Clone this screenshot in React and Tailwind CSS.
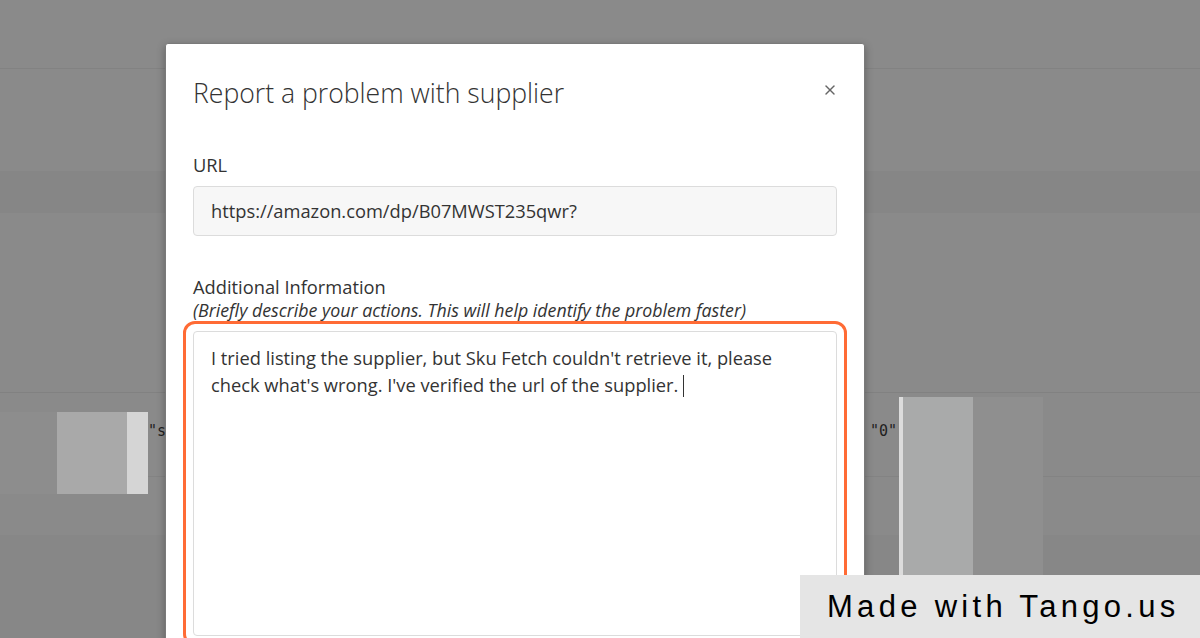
import React from 'react';
import { X } from 'lucide-react';

const App = () => {
    return (
        <div className="relative w-[1200px] h-[638px] overflow-hidden bg-[#8a8a8a] font-['Open_Sans',sans-serif]">

            {/* dimmed page behind the modal */}
            <div className="flex flex-col">
                <div className="h-[69px] border-b border-[#828282]"></div>
                <div className="h-[102px]"></div>
                <div className="h-[42px] bg-[#868686]"></div>
                <div className="h-[180px] border-b border-[#818181]"></div>
                <div className="h-[84px] border-b border-[#838383] flex items-start pt-[19px]">
                    <div className="w-[57px] h-[82px] bg-[#8d8d8d]"></div>
                    <div className="w-[70px] h-[82px] bg-[#a9a9a9]"></div>
                    <div className="w-[21px] h-[82px] bg-[#d5d5d5]"></div>
                    <span className="pt-[8px] font-['DejaVu_Sans_Mono',monospace] text-[15px] text-[#1f1f1f]">"s</span>
                    <span className="ml-auto mr-[303px] pt-[8px] font-['DejaVu_Sans_Mono',monospace] text-[15px] text-[#1f1f1f]">"0"</span>
                </div>
                <div className="h-[58px]"></div>
                <div className="h-[120px] bg-[#878787]"></div>
            </div>

            {/* light column on the right side of the page */}
            <div className="absolute left-[899px] top-[397px] w-[144px] h-[241px] flex">
                <div className="w-[4px] bg-[#dcdcdc]"></div>
                <div className="w-[70px] bg-[#a9aaaa]"></div>
                <div className="w-[70px] bg-[#8f8f8f]"></div>
            </div>

            {/* modal */}
            <div className="absolute left-[165px] top-[43px] w-[700px] h-[620px] bg-white border border-[#7a7a7a] rounded-[3px] shadow-[0_3px_9px_rgba(0,0,0,0.3)]">
                <div className="flex items-center justify-between pl-[27px] pr-[26px] pt-[29px]">
                    <h2 className="text-[26.6px] leading-[40px] font-light text-[#333]">Report a problem with supplier</h2>
                    <X size={16} strokeWidth={2.2} className="text-[#666] mt-[-6px]" />
                </div>

                <div className="px-[27px] pt-[40px]">
                    <label className="block text-[18.3px] leading-[24px] text-[#333]">URL</label>
                    <div className="mt-[9px] h-[50px] flex items-center px-[17px] bg-[#f7f7f7] border border-[#dcdcdc] rounded-[4px] text-[18.3px] text-[#333]">
                        https://amazon.com/dp/B07MWST235qwr?
                    </div>

                    <label className="block mt-[39px] text-[18.3px] leading-[24px] text-[#333]">Additional Information</label>
                    <p className="text-[17.8px] leading-[22px] italic text-[#333] whitespace-nowrap">(Briefly describe your actions. This will help identify the problem faster)</p>

                    <div className="ml-[-10px] mr-[-10px] p-[7px] border-[3px] border-[#ff6b35] rounded-[12px]">
                        <div className="h-[305px] px-[17px] pt-[12px] bg-white border border-[#dcdcdc] rounded-[4px] text-[18.3px] leading-[27px] text-[#333]">
                            I tried listing the supplier, but Sku Fetch couldn't retrieve it, please check what's wrong. I've verified the url of the supplier. <span className="inline-block w-px h-[22px] align-[-5px] bg-[#333]"></span>
                        </div>
                    </div>
                </div>
            </div>

            {/* tango badge */}
            <div className="absolute left-[800px] top-[575px] w-[400px] h-[63px] bg-[#e5e5e5] flex items-center pl-[27px]">
                <span className="text-[31px] leading-[36px] tracking-[4.3px] text-black font-['Liberation_Sans',sans-serif]">Made with Tango.us</span>
            </div>
        </div>
    );
};

export default App;
